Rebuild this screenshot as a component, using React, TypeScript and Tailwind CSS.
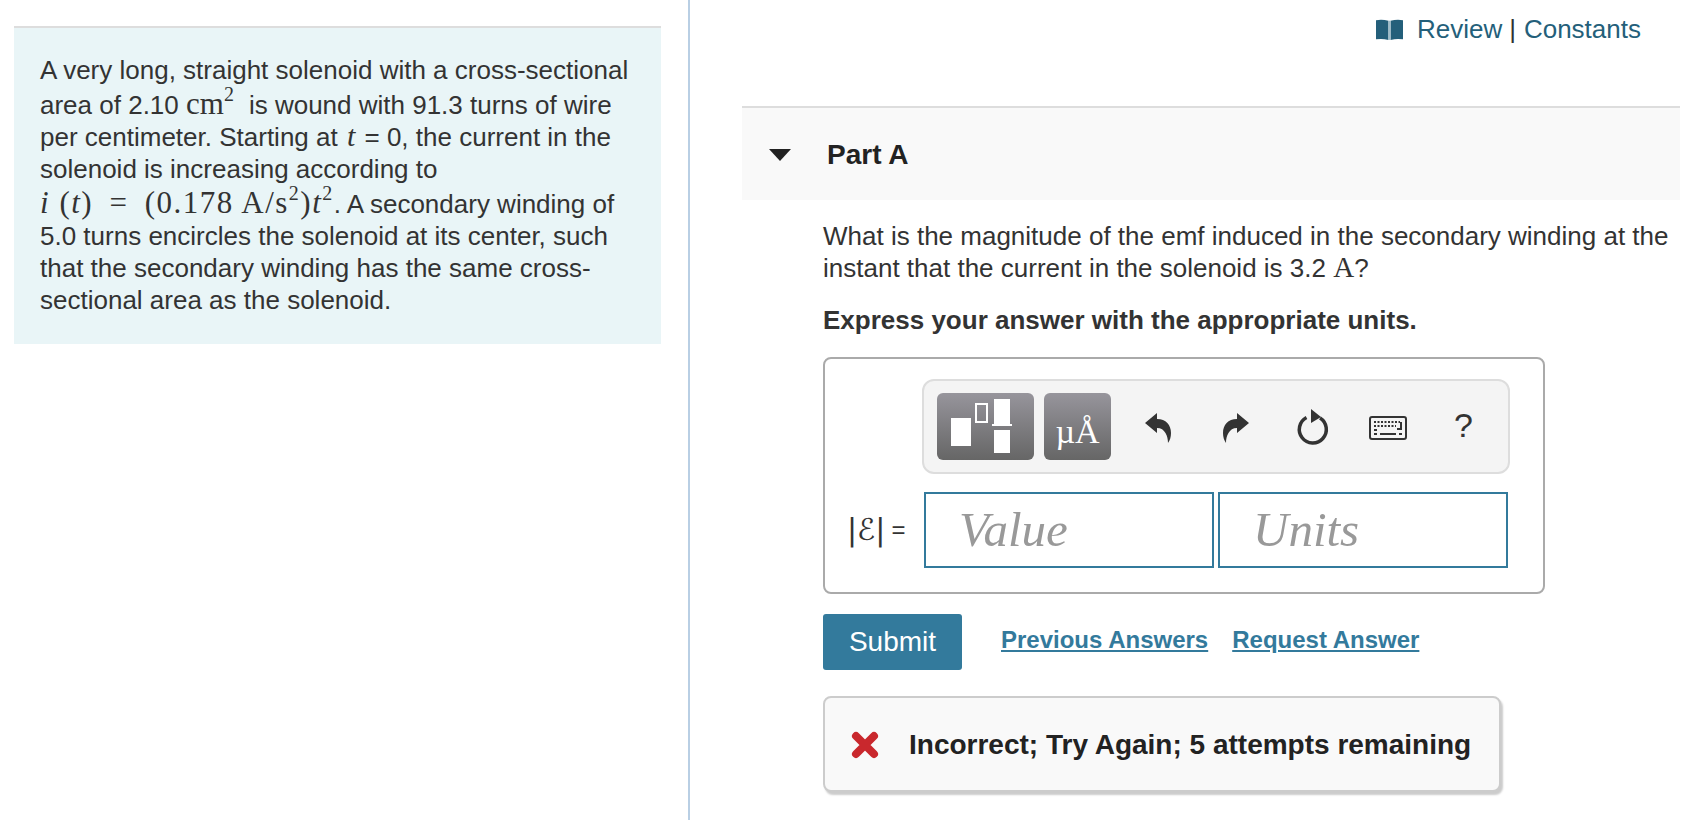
import React from 'react';

const serif = "font-['Liberation_Serif',serif]";

const BookIcon = () => (
    <svg width="27" height="21" viewBox="0 0 26 20" aria-hidden="true">
        <path d="M0 1 Q6 0 12 1.5 V20 Q6 18.5 0 19.5 Z" fill="#245f7a" />
        <path d="M26 1 Q20 0 14 1.5 V20 Q20 18.5 26 19.5 Z" fill="#245f7a" />
        <rect x="12" y="1.5" width="2" height="18.5" fill="#9fbcc9" />
    </svg>
);

const TemplateIcon = () => (
    <svg width="97" height="67" viewBox="0 0 97 67" aria-hidden="true">
        <rect x="14" y="25" width="20" height="28" fill="#fff" />
        <rect x="39" y="11" width="11" height="18" fill="none" stroke="#fff" strokeWidth="2" />
        <rect x="57" y="6" width="16" height="27" fill="#fff" />
        <rect x="55" y="31" width="20" height="2" fill="#fff" />
        <rect x="57" y="37" width="16" height="23" fill="#fff" />
    </svg>
);

const UndoIcon = ({ flip = false }: { flip?: boolean }) => (
    <svg width="28" height="32" viewBox="0 0 28 32" aria-hidden="true" className={flip ? '-scale-x-100' : ''}>
        <path d="M1 11 L13 1 V7 C22 7 27 13 27 21 C27 25 26 28 24 31 C24 24 21 16 13 16 V21 Z" fill="#333" />
    </svg>
);

const ResetIcon = () => (
    <svg width="34" height="38" viewBox="0 0 34 38" aria-hidden="true">
        <path d="M10.5 8.5 A13.5 13.5 0 1 0 24 9" fill="none" stroke="#333" strokeWidth="3.5" />
        <path d="M15 0 L25 8 L15 14 Z" fill="#333" />
    </svg>
);

const KeyboardIcon = () => (
    <svg width="38" height="24" viewBox="0 0 38 24" aria-hidden="true">
        <rect x="1" y="1" width="36" height="22" rx="2" fill="#f4f4f4" stroke="#333" strokeWidth="2" />
        <path d="M5 6 H31" stroke="#333" strokeWidth="2" strokeDasharray="2 1.5" />
        <path d="M5 10 H27" stroke="#333" strokeWidth="2" strokeDasharray="2 1.5" />
        <path d="M32 6 V13 H28" stroke="#333" strokeWidth="2" fill="none" />
        <path d="M5 14 H8 M5 18 H8 M11 18 H27 M30 18 H33" stroke="#333" strokeWidth="2" />
    </svg>
);

const CrossIcon = () => (
    <svg width="28" height="28" viewBox="0 0 28 28" aria-hidden="true">
        <path d="M5 5 L23 23 M23 5 L5 23" stroke="#c9282d" strokeWidth="8" strokeLinecap="round" />
    </svg>
);

const Sup = ({ children }: { children: React.ReactNode }) => (
    <span className="text-[20px] leading-[0] align-[13px]">{children}</span>
);

const Problem = () => (
    <div className="border-t-2 border-[#ddd] bg-[#e9f5f7] pt-[26px] pb-[28px] pl-[26px] pr-[20px] text-[26px] leading-[32px] text-[#333]">
        <p>
            A very long, straight solenoid with a cross-sectional area of 2.10{' '}
            <span className={`${serif} text-[31px] leading-[35px] whitespace-nowrap`}>cm<Sup>2</Sup></span>
            <span className="ml-[15px]">is wound with 91.3 turns of wire per centimeter. Starting at </span>
            <span className={`${serif} italic text-[30px] leading-[30px] mx-[2px]`}>t</span> = 0, the current in the solenoid is increasing according to{' '}
            <span className={`${serif} text-[31px] leading-[35px] whitespace-nowrap tracking-[1.5px]`}>
                <i>i</i> (<i>t</i>) <span className="mx-[7px]">=</span> (0.178 A/s<Sup>2</Sup>)<i>t</i><Sup>2</Sup>
            </span>
            . A secondary winding of 5.0 turns encircles the solenoid at its center, such that the secondary winding has the same cross-sectional area as the solenoid.
        </p>
    </div>
);

const ToolButton = ({ className, children }: { className: string; children: React.ReactNode }) => (
    <div className={`flex h-[67px] items-center justify-center rounded-[6px] bg-gradient-to-b from-[#97959c] to-[#666] ${className}`}>
        {children}
    </div>
);

const Toolbar = () => (
    <div className="flex h-[95px] w-[588px] items-center rounded-[12px] border-2 border-[#ddd] bg-[#f4f4f4] pl-[13px]">
        <ToolButton className="w-[97px]"><TemplateIcon /></ToolButton>
        <ToolButton className={`ml-[10px] w-[67px] ${serif} text-[34px] leading-none text-white`}>
            <span className="pt-[10px]">µÅ</span>
        </ToolButton>
        <div className="ml-[33px] mt-[2px] flex w-[28px] justify-center"><UndoIcon /></div>
        <div className="ml-[50px] mt-[2px] flex w-[28px] justify-center"><UndoIcon flip /></div>
        <div className="ml-[46px] mt-[2px] flex w-[34px] justify-center"><ResetIcon /></div>
        <div className="ml-[39px] mt-[2px] flex w-[38px] justify-center"><KeyboardIcon /></div>
        <div className="ml-[47px] mb-[4px] w-[18px] text-center text-[34px] leading-none text-[#333]">?</div>
    </div>
);

const AnswerBox = () => (
    <div className="mt-[21px] h-[237px] w-[722px] rounded-[8px] border-2 border-[#aaa] pt-[20px] pl-[97px]">
        <Toolbar />
        <div className="mt-[18px] flex items-center">
            <div className="-ml-[75px] flex w-[75px] items-center text-[#333]">
                <span className="font-['DejaVu_Sans',sans-serif] text-[30px] leading-none italic">|ℰ|</span>
                <span className="ml-[6px] text-[24px]">=</span>
            </div>
            <input
                placeholder="Value"
                className={`ml-[2px] h-[76px] w-[290px] border-2 border-[#337a9c] pl-[33px] pb-[2px] ${serif} text-[49px] italic outline-none placeholder:text-[#999]`}
            />
            <input
                placeholder="Units"
                className={`ml-[4px] h-[76px] w-[290px] border-2 border-[#337a9c] pl-[33px] pb-[2px] ${serif} text-[49px] italic outline-none placeholder:text-[#999]`}
            />
        </div>
    </div>
);

export default function App() {
    return (
        <div className="flex h-screen overflow-hidden bg-white font-['Liberation_Sans',sans-serif] text-[#333]">
            <div className="w-[690px] shrink-0 border-r-2 border-[#b9cfe4] pt-[26px] pl-[14px] pr-[27px]">
                <Problem />
            </div>
            <div className="min-w-0 flex-1 pl-[52px] pr-[12px]">
                <div className="flex h-[106px] items-start justify-end pt-[12px] pr-[39px] text-[26px] leading-[34px]">
                    <span className="mr-[14px] mt-[7px]"><BookIcon /></span>
                    <span className="text-[#245f7a]">Review</span>
                    <span className="ml-[7px] mr-[8px]">|</span>
                    <span className="text-[#245f7a]">Constants</span>
                </div>
                <div className="flex h-[94px] items-center border-t-2 border-[#ddd] bg-[#f9f9f9] pt-[2px]">
                    <span className="ml-[27px] h-0 w-0 border-x-[11px] border-t-[12px] border-x-transparent border-t-[#222]" />
                    <span className="ml-[36px] text-[28px] font-bold text-[#222]">Part A</span>
                </div>
                <div className="pl-[81px]">
                    <p className="mt-[20px] text-[26px] leading-[32px]">
                        What is the magnitude of the emf induced in the secondary winding at the instant that the current in the solenoid is 3.2 <span className={`${serif} text-[29px] leading-[29px]`}>A</span>?
                    </p>
                    <p className="mt-[20px] text-[26px] leading-[32px] font-bold">Express your answer with the appropriate units.</p>
                    <AnswerBox />
                    <div className="mt-[20px] flex items-start">
                        <button className="h-[56px] w-[139px] rounded-[3px] bg-[#337a9c] text-[28px] text-white">Submit</button>
                        <a className="ml-[39px] mt-[8px] text-[24px] font-bold text-[#337a9c] underline">Previous Answers</a>
                        <a className="ml-[24px] mt-[8px] text-[24px] font-bold text-[#337a9c] underline">Request Answer</a>
                    </div>
                    <div className="mt-[26px] flex h-[96px] w-[678px] items-center rounded-[8px] border-2 border-[#ccc] bg-[#f9f9f9] pl-[26px] pt-[2px] shadow-[2px_3px_2px_#ccc]">
                        <CrossIcon />
                        <span className="ml-[30px] text-[28px] font-bold text-[#222]">Incorrect; Try Again; 5 attempts remaining</span>
                    </div>
                </div>
            </div>
        </div>
    );
}
